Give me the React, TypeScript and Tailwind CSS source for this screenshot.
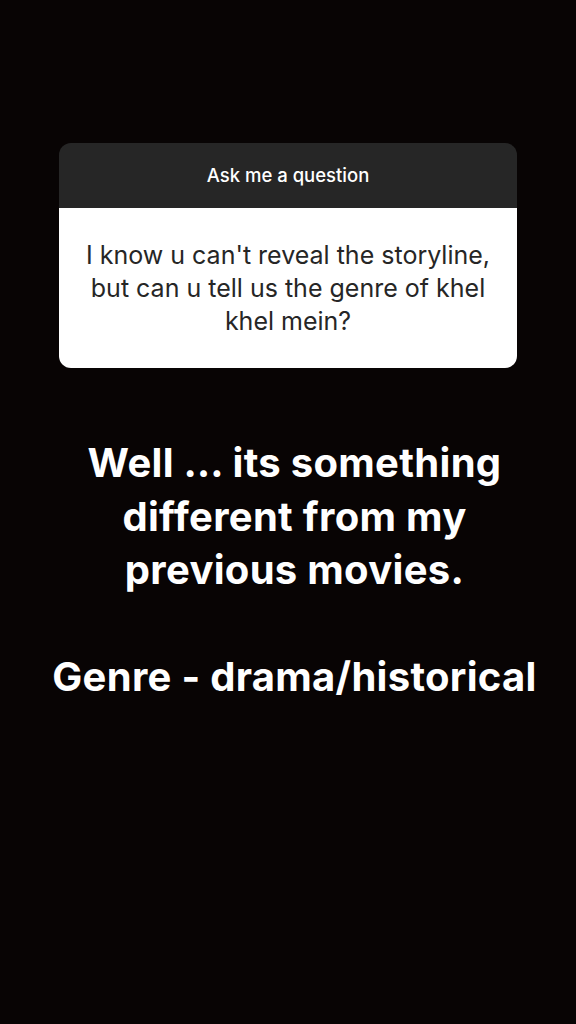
import React from "react";

export default function App() {
  return (
    <div
      className="w-[576px] h-[1024px] bg-[#080404] flex flex-col items-center overflow-hidden"
      style={{ fontFamily: "Inter, 'Noto Sans', 'Liberation Sans', sans-serif" }}
    >
      <div className="mt-[143px] w-[458px] rounded-[12px] overflow-hidden flex flex-col">
        <div className="h-[65px] bg-[#262626] flex items-center justify-center text-white text-[18.5px] font-medium">
          Ask me a question
        </div>
        <div className="h-[160px] bg-white flex items-center justify-center px-4 text-center text-[#262626] text-[25px] leading-[33px]">
          I know u can't reveal the storyline, but can u tell us the genre of khel khel mein?
        </div>
      </div>
      <div className="mt-[68px] w-[576px] pl-[13px] text-center text-white font-bold text-[40px] leading-[53.5px] tracking-[0.3px]">
        Well … its something
        <br />
        different from my
        <br />
        previous movies.
        <br />
        <br />
        Genre - drama/historical
      </div>
    </div>
  );
}
